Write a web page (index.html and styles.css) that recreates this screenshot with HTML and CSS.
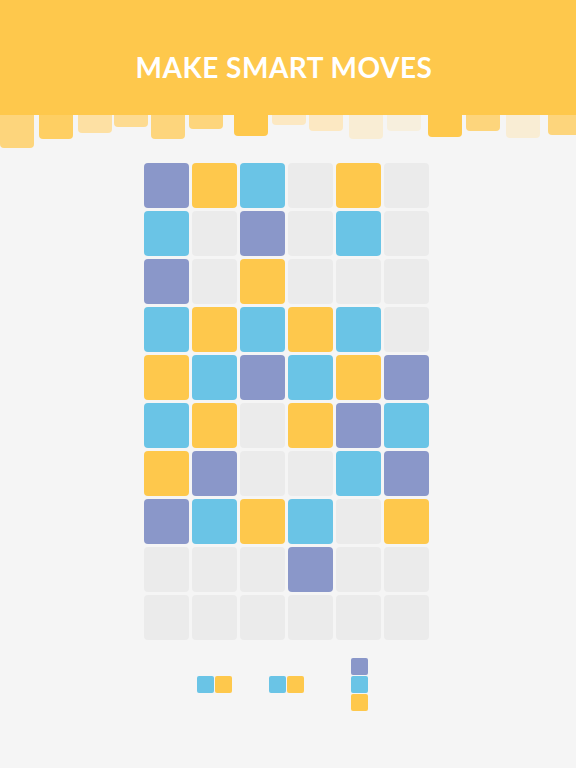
FILE: index.html
```html
<!DOCTYPE html>
<html lang="en">
<head>
    <meta charset="UTF-8">
    <meta name="viewport" content="width=device-width, initial-scale=1.0">
    <title>Make Smart Moves</title>
    <link rel="stylesheet" href="styles.css">
</head>
<body>

    <header class="banner">
        <h1>MAKE SMART MOVES</h1>
    </header>

    <div class="drips">
        <span class="drip c2" style="margin-left:0;height:33px"></span>
        <span class="drip c1" style="margin-left:5px;height:24px"></span>
        <span class="drip c3" style="margin-left:5px;height:18px"></span>
        <span class="drip c3b" style="margin-left:2px;height:12px"></span>
        <span class="drip c2" style="margin-left:3px;height:24px"></span>
        <span class="drip c2" style="margin-left:4px;height:14px"></span>
        <span class="drip c0" style="margin-left:11px;height:21px"></span>
        <span class="drip c4" style="margin-left:4px;height:10px"></span>
        <span class="drip c4" style="margin-left:3px;height:16px"></span>
        <span class="drip c5" style="margin-left:6px;height:24px"></span>
        <span class="drip c6" style="margin-left:4px;height:16px"></span>
        <span class="drip c0" style="margin-left:7px;height:22px"></span>
        <span class="drip c2" style="margin-left:4px;height:16px"></span>
        <span class="drip c5" style="margin-left:6px;height:23px"></span>
        <span class="drip c2" style="margin-left:8px;height:20px"></span>
    </div>

    <div class="board" id="board"></div>

    <div class="pieces">
        <div class="piece row first"><span class="b"></span><span class="y"></span></div>
        <div class="piece row second"><span class="b"></span><span class="y"></span></div>
        <div class="piece col third"><span class="p"></span><span class="b"></span><span class="y"></span></div>
    </div>

    <script>
        const rows = [
            "PYBGYG",
            "BGPGBG",
            "PGYGGG",
            "BYBYBG",
            "YBPBYP",
            "BYGYPB",
            "YPGGBP",
            "PBYBGY",
            "GGGPGG",
            "GGGGGG"
        ];
        const board = document.getElementById("board");
        rows.forEach(row => {
            for (const ch of row) {
                let cell = document.createElement("div");
                cell.className = "cell " + ch.toLowerCase();
                board.appendChild(cell);
            }
        });
    </script>

</body>
</html>
```

FILE: styles.css
```css
body {
    margin: 0;
    background: #f5f5f5;
    font-family: "DejaVu Sans", "Liberation Sans", sans-serif;
    overflow: hidden;
}

.banner {
    height: 115px;
    background: #fec84c;
    display: flex;
    align-items: center;
    justify-content: center;
}

.banner h1 {
    margin: 0;
    color: #ffffff;
    font-family: Lato, "DejaVu Sans", sans-serif;
    font-size: 28px;
    font-weight: bold;
    letter-spacing: 0.5px;
    padding: 19px 8px 0 0;
}

.drips {
    display: flex;
    align-items: flex-start;
    height: 33px;
}

.drip {
    flex: none;
    width: 34px;
    border-radius: 0 0 4px 4px;
}

.c0 { background: #fec84c; }
.c1 { background: #fecf63; }
.c2 { background: #fdd57c; }
.c3 { background: #fde0a3; }
.c3b { background: #fddb91; }
.c4 { background: #fce8c2; }
.c5 { background: #f9edd4; }
.c6 { background: #f7efdd; }

.board {
    margin: 15px 0 0 144px;
    display: grid;
    grid-template-columns: repeat(6, 45px);
    grid-auto-rows: 45px;
    gap: 3px;
}

.cell {
    border-radius: 4px;
}

.p { background: #8a97c9; }
.y { background: #fec84c; }
.b { background: #6ac4e6; }
.g { background: #ebebeb; }

.pieces {
    display: flex;
    align-items: center;
    margin-top: 18px;
    padding-left: 197px;
}

.piece {
    display: flex;
    gap: 1px;
}

.piece.col {
    flex-direction: column;
}

.piece span {
    width: 17px;
    height: 17px;
    border-radius: 2px;
}

.second { margin-left: 37px; }
.third { margin-left: 47px; }
```
